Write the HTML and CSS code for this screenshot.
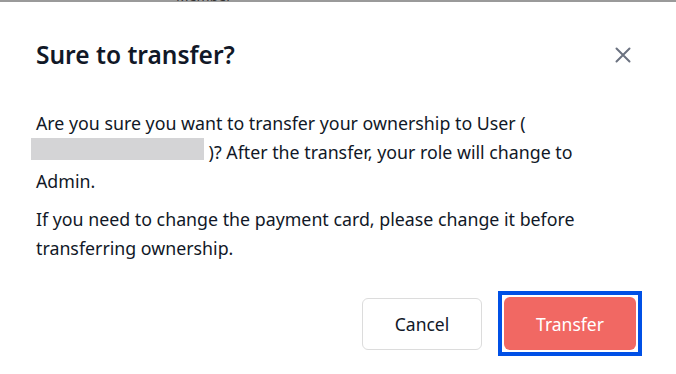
FILE: index.html
```html
<!DOCTYPE html>
<html>
<head>
<meta charset="utf-8">
<link rel="stylesheet" href="styles.css">
</head>
<body>
<div class="backdrop"><span class="behind-text">Member</span></div>
<div class="dialog">
  <div class="header">
    <h2 class="title">Sure to transfer?</h2>
    <button class="close" aria-label="Close">
      <svg width="16" height="16" viewBox="0 0 16 16"><path d="M1.5 1.5 L14.5 14.5 M14.5 1.5 L1.5 14.5" stroke="#6b7280" stroke-width="2" stroke-linecap="round"/></svg>
    </button>
  </div>
  <div class="body">
    <p class="para">Are you sure you want to transfer your ownership to User (<br><span class="redact-wrap"><span class="redacted"></span></span> )? After the transfer, your role will change to Admin.</p>
    <p class="para">If you need to change the payment card, please change it before transferring ownership.</p>
  </div>
  <div class="footer">
    <button class="btn btn-cancel">Cancel</button>
    <span class="focus-ring"><button class="btn btn-danger">Transfer</button></span>
  </div>
</div>
</body>
</html>
```

FILE: styles.css
```css
* { box-sizing: border-box; }
html, body { margin: 0; padding: 0; }
body {
  width: 676px;
  height: 374px;
  overflow: hidden;
  background: #fff;
  font-family: "Noto Sans", "Open Sans", sans-serif;
  color: #111827;
  position: relative;
}
.backdrop {
  position: absolute;
  left: 0; top: 0;
  width: 676px;
  height: 2px;
  background: #9a9a9a;
  overflow: visible;
}
.behind-text {
  position: absolute;
  left: 176px;
  top: -12px;
  font-size: 14px;
  line-height: 16px;
  color: #333;
}
.dialog {
  padding: 38px 0 0 36px;
}
.header {
  display: flex;
  justify-content: space-between;
  align-items: center;
  height: 34px;
  padding-right: 45px;
}
.title {
  margin: 0;
  font-size: 24.5px;
  font-weight: 600;
  line-height: 34px;
}
.close {
  border: 0;
  background: none;
  padding: 0;
  width: 16px;
  height: 16px;
  display: flex;
}
.body {
  padding-top: 37px;
  padding-bottom: 1px;
}
.para {
  margin: 0 0 9px 0;
  font-size: 17.8px;
  line-height: 29px;
  width: 560px;
}
.redact-wrap {
  position: relative;
  display: inline-block;
  width: 168px;
  height: 10px;
}
.redacted {
  position: absolute;
  left: -5px;
  top: -11px;
  width: 173px;
  height: 22px;
  background: #d4d4d6;
}
.footer {
  display: flex;
  justify-content: flex-end;
  align-items: center;
  gap: 16px;
  margin-top: 18px;
  padding-right: 34px;
}
.btn {
  font-family: inherit;
  font-size: 17.5px;
  border-radius: 6px;
  cursor: pointer;
}
.btn-cancel {
  width: 120px;
  height: 52px;
  background: #fff;
  border: 1px solid #dcdcdc;
  color: #111827;
}
.focus-ring {
  display: flex;
  padding: 2px;
  border: 4px solid #0050e6;
  background: #fff;
}
.btn-danger {
  width: 132px;
  height: 53px;
  background: #f16863;
  border: 0;
  color: #fff;
}
```
